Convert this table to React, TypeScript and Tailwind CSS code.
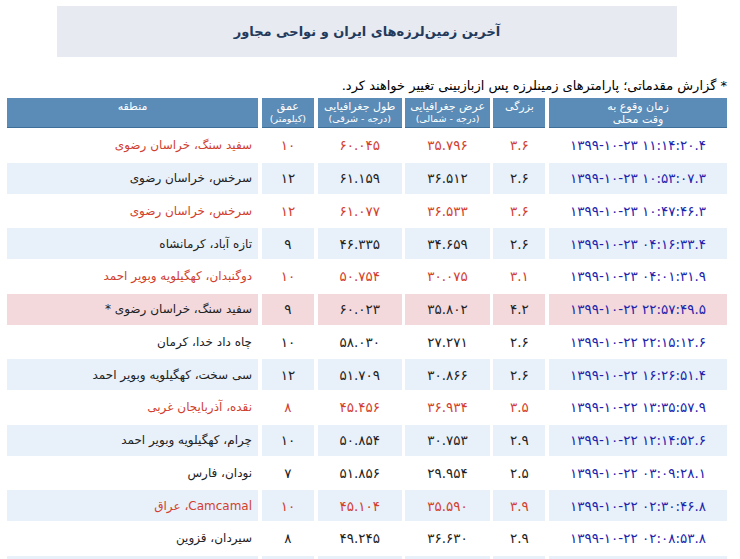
import React from "react";

type Row = {
  t: string;
  m: string;
  lat: string;
  lon: string;
  d: string;
  r: string;
  red?: boolean;
  bg: "w" | "b" | "p";
};

const rows: Row[] = [
  { t: "۱۳۹۹-۱۰-۲۳ ۱۱:۱۴:۲۰.۴", m: "۳.۶", lat: "۳۵.۷۹۶", lon: "۶۰.۰۴۵", d: "۱۰", r: "سفید سنگ، خراسان رضوی", red: true, bg: "w" },
  { t: "۱۳۹۹-۱۰-۲۳ ۱۰:۵۳:۰۷.۳", m: "۲.۶", lat: "۳۶.۵۱۲", lon: "۶۱.۱۵۹", d: "۱۲", r: "سرخس، خراسان رضوی", bg: "b" },
  { t: "۱۳۹۹-۱۰-۲۳ ۱۰:۴۷:۴۶.۳", m: "۳.۶", lat: "۳۶.۵۳۳", lon: "۶۱.۰۷۷", d: "۱۲", r: "سرخس، خراسان رضوی", red: true, bg: "w" },
  { t: "۱۳۹۹-۱۰-۲۳ ۰۴:۱۶:۳۳.۴", m: "۲.۶", lat: "۳۴.۶۵۹", lon: "۴۶.۳۳۵", d: "۹", r: "تازه آباد، کرمانشاه", bg: "b" },
  { t: "۱۳۹۹-۱۰-۲۳ ۰۴:۰۱:۳۱.۹", m: "۳.۱", lat: "۳۰.۰۷۵", lon: "۵۰.۷۵۴", d: "۱۰", r: "دوگنبدان، کهگیلویه وبویر احمد", red: true, bg: "w" },
  { t: "۱۳۹۹-۱۰-۲۲ ۲۲:۵۷:۴۹.۵", m: "۴.۲", lat: "۳۵.۸۰۲", lon: "۶۰.۰۲۳", d: "۹", r: "سفید سنگ، خراسان رضوی *", bg: "p" },
  { t: "۱۳۹۹-۱۰-۲۲ ۲۲:۱۵:۱۲.۶", m: "۲.۶", lat: "۲۷.۲۷۱", lon: "۵۸.۰۳۰", d: "۱۰", r: "چاه داد خدا، کرمان", bg: "w" },
  { t: "۱۳۹۹-۱۰-۲۲ ۱۶:۲۶:۵۱.۴", m: "۲.۶", lat: "۳۰.۸۶۶", lon: "۵۱.۷۰۹", d: "۱۲", r: "سی سخت، کهگیلویه وبویر احمد", bg: "b" },
  { t: "۱۳۹۹-۱۰-۲۲ ۱۳:۳۵:۵۷.۹", m: "۳.۵", lat: "۳۶.۹۳۴", lon: "۴۵.۴۵۶", d: "۸", r: "نقده، آذربایجان غربی", red: true, bg: "w" },
  { t: "۱۳۹۹-۱۰-۲۲ ۱۲:۱۴:۵۲.۶", m: "۲.۹", lat: "۳۰.۷۵۳", lon: "۵۰.۸۵۴", d: "۱۰", r: "چرام، کهگیلویه وبویر احمد", bg: "b" },
  { t: "۱۳۹۹-۱۰-۲۲ ۰۳:۰۹:۲۸.۱", m: "۲.۵", lat: "۲۹.۹۵۴", lon: "۵۱.۸۵۶", d: "۷", r: "نودان، فارس", bg: "w" },
  { t: "۱۳۹۹-۱۰-۲۲ ۰۲:۳۰:۴۶.۸", m: "۳.۹", lat: "۳۵.۵۹۰", lon: "۴۵.۱۰۴", d: "۱۰", r: "Camcamal، عراق", red: true, bg: "b" },
  { t: "۱۳۹۹-۱۰-۲۲ ۰۲:۰۸:۵۳.۸", m: "۲.۹", lat: "۳۶.۶۳۰", lon: "۴۹.۲۴۵", d: "۸", r: "سیردان، قزوین", bg: "w" },
  { t: "", m: "", lat: "", lon: "", d: "", r: "", bg: "b" },
];

const bgCls = { w: "bg-white", b: "bg-[#e8f0fa]", p: "bg-[#f3d9db]" };

export default function App() {
  return (
    <div className="w-[740px] h-[559px] overflow-hidden bg-white font-['DejaVu_Sans',sans-serif]" dir="rtl">
      <div className="pt-[6px] flex justify-center" dir="ltr">
        <div className="ml-[-6px] w-[620px] h-[51px] bg-[#e7eaf0] flex items-center justify-center">
          <span dir="rtl" className="text-[13px] font-bold text-[#233a5c]">
            آخرین زمین‌لرزه‌های ایران و نواحی مجاور
          </span>
        </div>
      </div>
      <div className="mt-[20px] pr-[13px] text-[13px] leading-[18px] text-black">
        * گزارش مقدماتی؛ پارامترهای زمینلرزه پس ازبازبینی تغییر خواهند کرد.
      </div>
      <div className="mt-[3px] mr-[13px] w-[720px] flex flex-col gap-[2px]">
        <div className="flex gap-[3.6px] h-[30px] shrink-0 text-white text-[11px] leading-[13px]">
          <div className="w-[178px] bg-[#5a8cb7] border-b border-[#3e6f98] text-center pt-[2px]">
            <div>زمان وقوع به</div>
            <div>وقت محلی</div>
          </div>
          <div className="w-[52px] bg-[#5a8cb7] border-b border-[#3e6f98] text-center pt-[2px]">بزرگی</div>
          <div className="w-[84.5px] bg-[#5a8cb7] border-b border-[#3e6f98] text-center pt-[2px]">
            <div>عرض جغرافیایی</div>
            <div className="text-[9.5px] leading-[11px]">(درجه - شمالی)</div>
          </div>
          <div className="w-[84px] bg-[#5a8cb7] border-b border-[#3e6f98] text-center pt-[2px]">
            <div>طول جغرافیایی</div>
            <div className="text-[9.5px] leading-[11px]">(درجه - شرقی)</div>
          </div>
          <div className="w-[52.5px] bg-[#5a8cb7] border-b border-[#3e6f98] text-center pt-[2px]">
            <div>عمق</div>
            <div className="text-[9.5px] leading-[11px]">(کیلومتر)</div>
          </div>
          <div className="flex-1 bg-[#5a8cb7] border-b border-[#3e6f98] text-center pt-[2px]">منطقه</div>
        </div>
        {rows.map((r, i) => {
          const c = r.red ? "text-[#d2402e]" : "text-[#222]";
          const bg = bgCls[r.bg];
          return (
            <div key={i} className="flex gap-[3.6px] h-[30.75px] shrink-0 text-[13.5px] tracking-[0.5px]">
              <div className={`w-[178px] ${bg} flex items-center justify-center text-[#2024ad] text-[13.5px] tracking-[1.6px]`}>
                <span dir="ltr">{r.t}</span>
              </div>
              <div className={`w-[52px] ${bg} flex items-center justify-center ${c}`}>{r.m}</div>
              <div className={`w-[84.5px] ${bg} flex items-center justify-center ${c}`}>{r.lat}</div>
              <div className={`w-[84px] ${bg} flex items-center justify-center ${c}`}>{r.lon}</div>
              <div className={`w-[52.5px] ${bg} flex items-center justify-center ${c}`}>{r.d}</div>
              <div className={`flex-1 ${bg} flex items-center justify-start pr-[6px] ${c} text-[12px] tracking-normal`}>{r.r}</div>
            </div>
          );
        })}
      </div>
    </div>
  );
}
